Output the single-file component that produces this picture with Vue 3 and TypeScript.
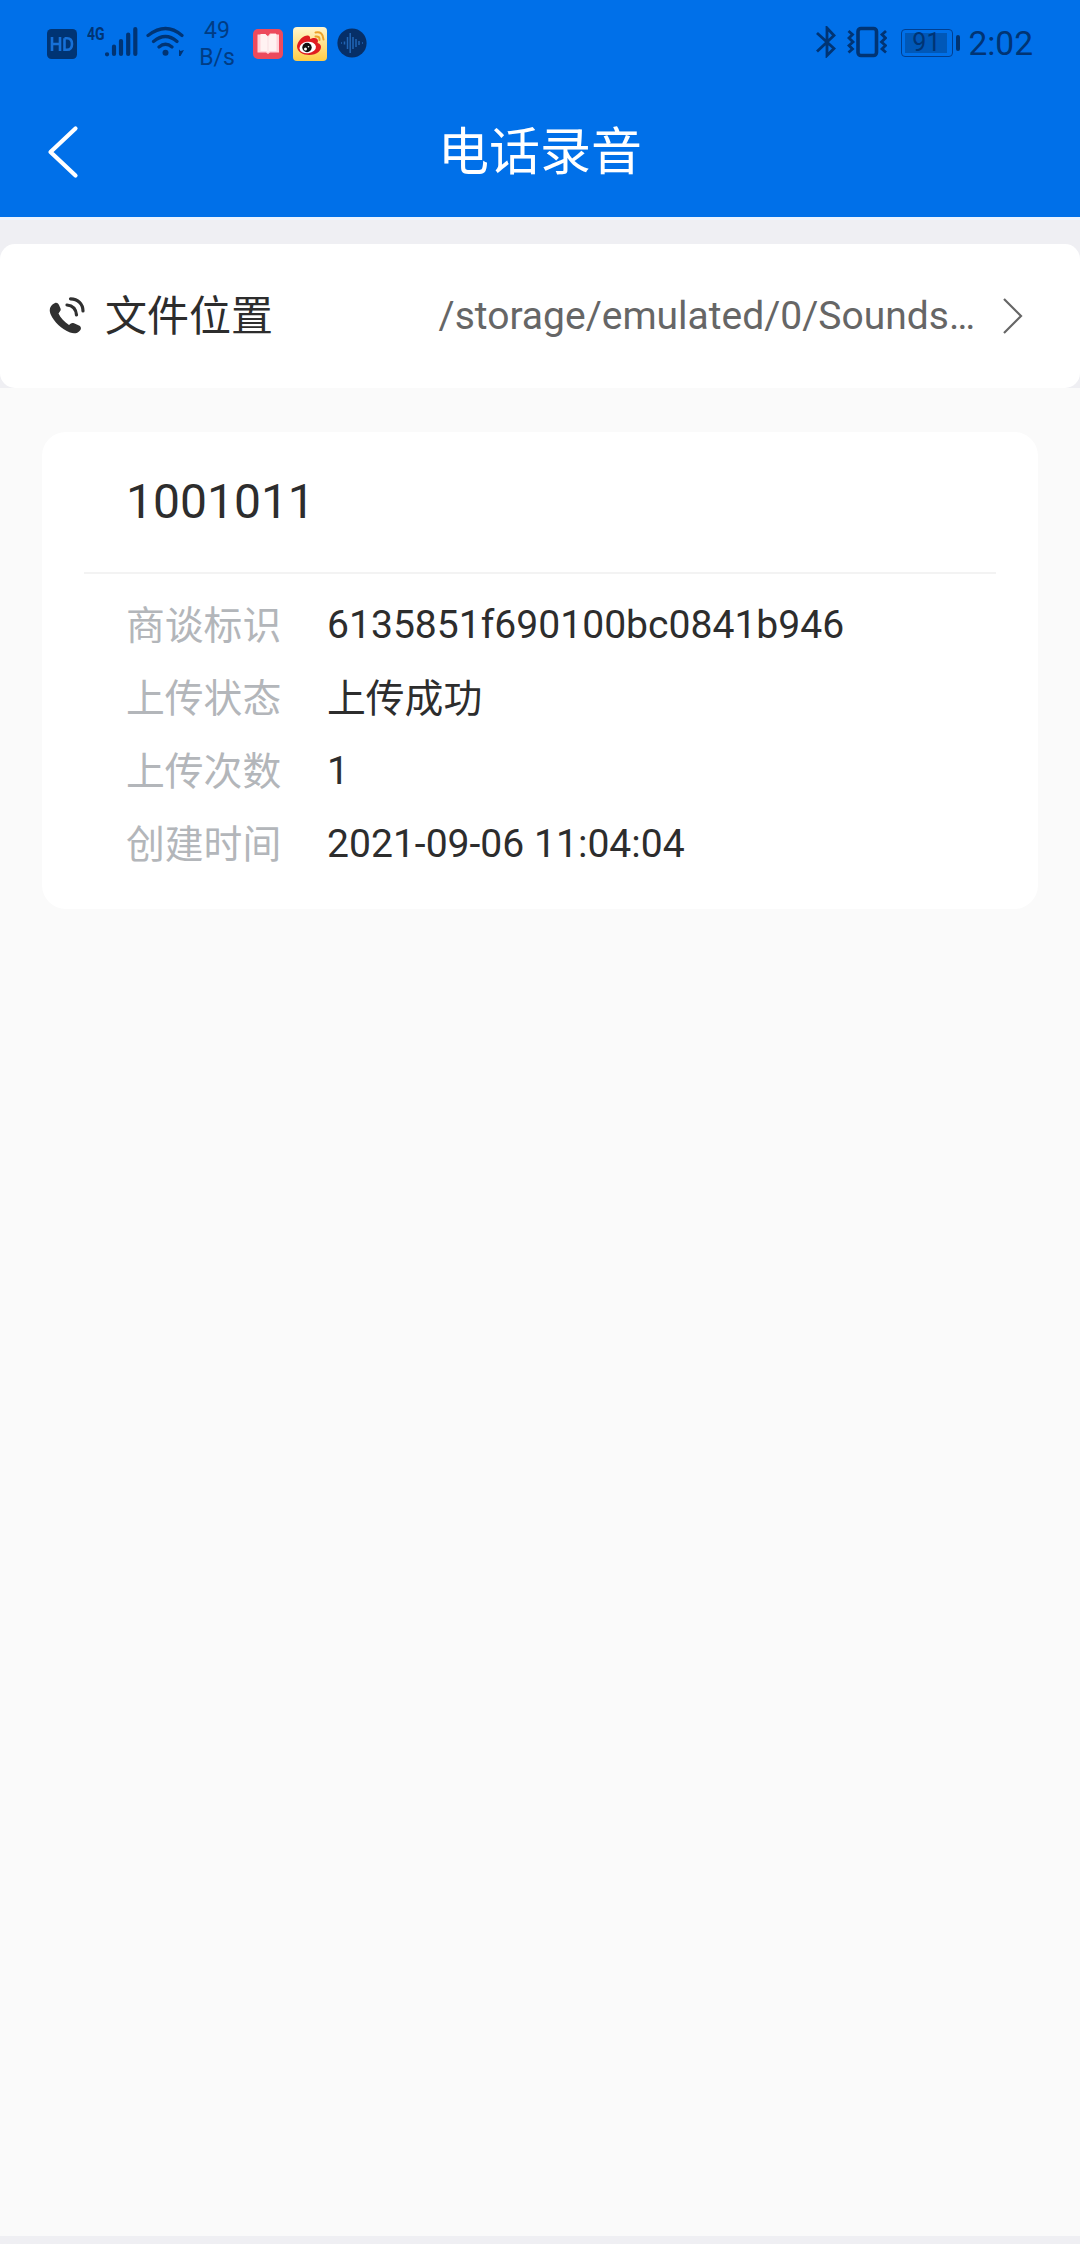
<script setup lang="ts">
interface Field {
  label: string
  value: string
}

const recordTitle = '1001011'
const storagePath = '/storage/emulated/0/Sounds…'
const fields: Field[] = [
  { label: '商谈标识', value: '6135851f690100bc0841b946' },
  { label: '上传状态', value: '上传成功' },
  { label: '上传次数', value: '1' },
  { label: '创建时间', value: '2021-09-06 11:04:04' },
]

// Chinese glyphs run slightly smaller than Latin ones in the list.
const isHan = (text: string): boolean => /[\u4e00-\u9fff]/.test(text)
</script>

<template>
  <div class="screen">
    <header class="top">
      <div class="status">
        <svg class="hd" viewBox="0 0 30 30" width="30" height="30">
          <rect width="30" height="30" rx="4.500" fill="#003474" />
          <path d="M5 8V22M13 8V22M5 15H13M17.500 9.200V20.800H20Q25 20.800 25 15T20 9.200H17.500" fill="none" stroke="#1670d8" stroke-width="2.600" />
        </svg>
        <span class="net">4G</span>
        <svg class="signal" viewBox="0 0 34 32" width="34" height="32" stroke="#003474" stroke-width="4.200" stroke-linecap="round">
          <path d="M3 28.300H3.100M10 28V20.500M17 28V15M24.200 28V8.500M31.300 28V3" />
        </svg>
        <svg class="wifi" viewBox="0 0 40 32" width="40" height="32" fill="none" stroke="#003474" stroke-width="3.200" stroke-linecap="round">
          <path d="M2 9.500Q20 -4.500 36 9.500M7.500 15.500Q19.500 5.500 31 15.500M13 21Q19.500 15.500 26 21" />
          <circle cx="19.500" cy="26.800" r="3" fill="#003474" stroke="none" />
          <path d="M33 23.500L34.500 25L38 24L34.500 30H33Z" fill="#003474" stroke="none" />
        </svg>
        <div class="speed"><span>49</span><span>B/s</span></div>
        <svg class="book" viewBox="0 0 30 30" width="30" height="30">
          <rect width="30" height="30" rx="5" fill="#ed4a5d" />
          <path d="M4.500 5.500H12L15 7L17 4.500H23V5.500H26V23.500H17L15 25L13 23.500H4.500Z" fill="#ffd3d9" />
          <path d="M7.500 5H12.500L15 8L18 5H23.500V22H17L15 23L13 22H7.500Z" fill="#fff2f2" />
          <path d="M15 7V22" stroke="#f8dfe2" />
        </svg>
        <svg class="weibo" viewBox="0 0 34 34" width="34" height="34">
          <defs><linearGradient id="weiboGold" x1="0" y1="0" x2="0" y2="1"><stop stop-color="#fff6cf" /><stop offset="1" stop-color="#ffcc45" /></linearGradient></defs>
          <rect width="34" height="34" rx="4" fill="url(#weiboGold)" />
          <path d="M4 19C5 13 11 8 15 8.500C17 9 17.500 10.500 17 12C20 10.500 25 10 25 14L24.500 16C29 17 29 22 25.500 25C20 30 4 29 4 19Z" fill="#e01b20" />
          <ellipse cx="14.700" cy="20.500" rx="8.300" ry="5.800" transform="rotate(-7 14.700 20.500)" fill="#fff" />
          <circle cx="14" cy="20.500" r="4.700" fill="#111" />
          <circle cx="12.500" cy="22" r="1.500" fill="#fff" /><circle cx="15.500" cy="19.800" r=".8" fill="#fff" />
          <path d="M22.500 5.500Q30 4 30.500 12.500M22.500 9.500Q27 9 26.500 13" fill="none" stroke="#eca229" stroke-width="2" stroke-linecap="round" />
        </svg>
        <svg class="voice" viewBox="0 0 30 30" width="30" height="30">
          <circle cx="15" cy="15" r="14.600" fill="#062f68" />
          <path d="M4 15H5M7.500 13.500V16.500M10.500 9V21M13.200 5V25M16 9V21M19 11V19M22 13V17M25 15H26" stroke="#2165b5" stroke-width="1.500" />
        </svg>
        <div class="status-right">
          <svg class="bt" viewBox="0 0 20 32" width="20" height="32" fill="none" stroke="#003474" stroke-width="2.800">
            <path d="M1 7L18 22.500L11 29.500V2L18 9.500L1 25.500" />
          </svg>
          <svg class="vibrate" viewBox="0 0 40 32" width="40" height="32" fill="none" stroke="#003474">
            <rect x="11" y="2.500" width="18.500" height="27" rx="3" stroke-width="3.600" />
            <path d="M1.500 5L5.500 8.500L2 12L6 16L2 19.500L5.500 23L1.500 26.500M39 5L35 8.500L38.500 12L34.500 16L38.500 19.500L35 23L39 26.500" stroke-width="2.800" />
          </svg>
          <span class="battery"><span class="level">91</span></span>
          <i class="battery-cap"></i>
          <span class="clock">2:02</span>
        </div>
      </div>
      <div class="nav">
        <svg class="back" viewBox="0 0 32 54" width="32" height="54" fill="none" stroke="#fff" stroke-width="4.200" stroke-linecap="round" stroke-linejoin="round">
          <path d="M28.500 3.500L3.500 27L28.500 50.500" />
        </svg>
        <h1>电话录音</h1>
      </div>
    </header>

    <section class="location-wrap">
      <div class="location">
        <svg class="phone" viewBox="0 0 36 38" width="36" height="38">
          <path d="M6 6C7.500 5.300 9 6 10 8L11.500 11.500C12.200 13.500 11 14.500 9.500 16.500C11.500 21 15.500 25 20 28C22 26 23 25.500 25 26.200L30 28.500C32.500 29.700 32.300 32 31 33.500C28.500 36.500 25 37 21 35.500C12.500 32 5 25 1.500 17C-.5 12 1.500 8 6 6Z" fill="#303030" />
          <path d="M21.500 1.800C29 1.800 34 7 34 14M18 8C23.500 8.500 27 12 27.500 18" fill="none" stroke="#303030" stroke-width="3.200" stroke-linecap="round" />
        </svg>
        <span class="location-name">文件位置</span>
        <span class="path">{{ storagePath }}</span>
        <svg class="go" viewBox="0 0 20 36" width="20" height="36" fill="none" stroke="#666" stroke-width="2.200">
          <path d="M1 1L18 18L1 35" />
        </svg>
      </div>
    </section>

    <main>
      <article class="card">
        <h2>{{ recordTitle }}</h2>
        <dl>
          <div v-for="field in fields" :key="field.label" class="row">
            <dt class="han">{{ field.label }}</dt>
            <dd :class="{ han: isHan(field.value) }">{{ field.value }}</dd>
          </div>
        </dl>
      </article>
    </main>
    <footer></footer>
  </div>
</template>

<style>
body { margin: 0; }
</style>

<style scoped>
.screen {
  display: flex;
  flex-direction: column;
  width: 1080px;
  height: 2244px;
  overflow: hidden;
  background: #efeff3;
  color: #2d2d2d;
  font-family: Roboto, "Noto Sans CJK SC", sans-serif;
}
.screen svg { display: block; flex: none; }
.top { height: 217px; flex: none; background: #0070e9; border-bottom: 3px solid #ebf3ff; box-sizing: content-box; }
.status { display: flex; height: 87px; align-items: center; padding: 0 47px; box-sizing: border-box; color: #003474; white-space: nowrap; }
.net { width: 17px; margin: -19px 0 0 10px; font-size: 18px; font-weight: 700; line-height: 20px; transform: scaleX(.78); transform-origin: left; }
.signal { margin-top: -3px; }
.wifi { margin: -3px 0 0 8px; }
.speed { display: flex; flex-direction: column; align-items: center; width: 36px; margin-left: 13px; color: #003c84; font-size: 23px; line-height: 27px; }
.book { margin-left: 18px; }
.weibo { margin-left: 10px; }
.voice { margin-left: 10px; margin-top: -2px; }
.status-right { display: flex; align-items: center; margin-left: auto; }
.bt { margin-top: -3px; }
.vibrate { margin: -3px 0 0 11px; }
.battery { display: flex; width: 52px; height: 28px; margin: -2px 0 0 14px; padding: 3px; box-sizing: border-box; border: 1.5px solid #003f91; border-radius: 4px; }
.level { width: 42px; height: 20px; background: #0058b8; font-size: 25px; line-height: 20px; text-align: center; }
.battery-cap { width: 4px; height: 16px; margin: -2px 0 0 3px; border-radius: 2px; background: #003474; }
.clock { margin: 0 0 0 8px; font-size: 33.5px; line-height: 40px; }
.nav { display: grid; grid-template-columns: 80px 1fr 80px; height: 130px; align-items: center; }
.back { margin-left: 47px; }
.nav h1 { margin: 1px 0 0; color: #fff; font-size: 51px; font-weight: 400; line-height: 60px; text-align: center; }
.location-wrap { flex: none; height: 144px; margin-top: 24px; }
.location { display: flex; height: 144px; align-items: center; padding: 0 57px 0 49px; box-sizing: border-box; border-radius: 15px; background: #fff; }
.location-name { margin: 1px 0 0 20px; font-size: 42px; line-height: 60px; }
.path { margin-left: auto; color: #666; font-size: 39px; line-height: 50px; }
.go { margin-left: 28px; }
main { flex: 1; padding: 44px 42px 0; background: #fafafa; }
.card { height: 477px; padding: 0 42px; box-sizing: border-box; border-radius: 24px; background: #fff; }
.card h2 { height: 142px; margin: 0; padding-left: 42px; box-sizing: border-box; border-bottom: 2px solid #f3f3f3; font-size: 48px; font-weight: 400; line-height: 140px; }
dl { margin: 0; padding: 15px 43px 0 42px; }
.row { display: flex; height: 73px; align-items: center; font-size: 39.1px; line-height: 73px; }
dt { width: 201px; color: #b3b6ba; }
dd { margin: 0; }
.han { font-size: 38.8px; line-height: 73px; }
footer { flex: none; height: 8px; }
</style>
